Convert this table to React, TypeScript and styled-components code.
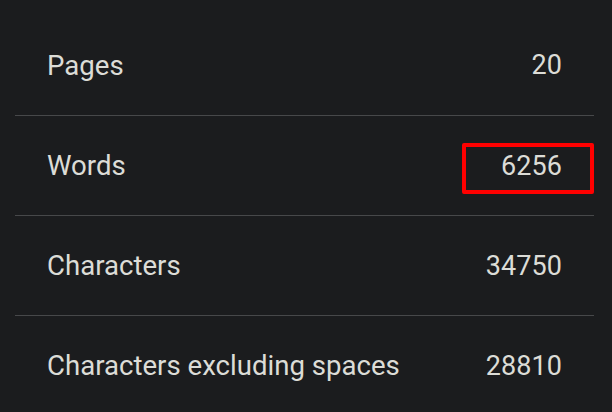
import React from "react";
import styled, {createGlobalStyle} from "styled-components";

const GlobalStyle = createGlobalStyle`
    html, body {
        margin: 0;
        padding: 0;
        background-color: #1b1c1e;
    }
    body {
        font-family: Roboto, "Liberation Sans", sans-serif;
        overflow: hidden;
    }
`;

const Page = styled.div`
    width: 612px;
    height: 412px;
    padding: 15px 18px 0 15px;
    box-sizing: border-box;
    background-color: #1b1c1e;
`;

const Table = styled.div`
    display: flex;
    flex-direction: column;
`;

const Row = styled.div`
    position: relative;
    display: flex;
    align-items: center;
    justify-content: space-between;
    height: 100px;
    box-sizing: border-box;
    padding: 0 32px;
    color: #dcdcd7;

    & + & {
        border-top: 1px solid #47484a;
    }
`;

const Label = styled.span`
    font-size: 27.6px;
    letter-spacing: 0;
`;

const Value = styled.span`
    font-size: 27px;
    letter-spacing: 0.1px;
`;

const Highlight = styled.div`
    position: absolute;
    right: 0;
    top: 27px;
    width: 132px;
    height: 51px;
    box-sizing: border-box;
    border: 4px solid #ff0000;
    border-radius: 2px;
    pointer-events: none;
`;

const stats = [
    {label: "Pages", value: "20", highlighted: false},
    {label: "Words", value: "6256", highlighted: true},
    {label: "Characters", value: "34750", highlighted: false},
    {label: "Characters excluding spaces", value: "28810", highlighted: false},
];

export default function App() {
    return (
        <>
            <GlobalStyle/>
            <Page>
                <Table>
                    {stats.map((stat) => (
                        <Row key={stat.label}>
                            <Label>{stat.label}</Label>
                            <Value>{stat.value}</Value>
                            {stat.highlighted && <Highlight/>}
                        </Row>
                    ))}
                </Table>
            </Page>
        </>
    );
}
